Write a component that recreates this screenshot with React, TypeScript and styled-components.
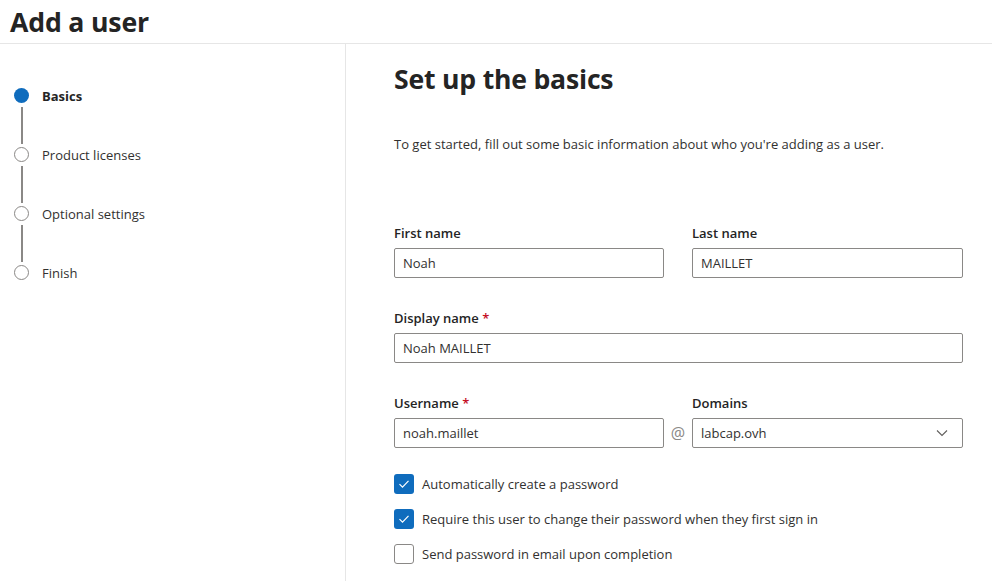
import styled, { createGlobalStyle } from "styled-components";

const GlobalStyle = createGlobalStyle`
  html, body {
    margin: 0;
    padding: 0;
    background: #ffffff;
  }
  body {
    font-family: "Open Sans", "Noto Sans", sans-serif;
    color: #323130;
  }
`;

const steps = [
  { label: "Basics", active: true },
  { label: "Product licenses", active: false },
  { label: "Optional settings", active: false },
  { label: "Finish", active: false },
];

const checks = [
  { label: "Automatically create a password", checked: true },
  { label: "Require this user to change their password when they first sign in", checked: true },
  { label: "Send password in email upon completion", checked: false },
];

export default function App() {
  return (
    <>
      <GlobalStyle />
      <StPage>
        <StHeader>
          <h1>Add a user</h1>
        </StHeader>
        <StBody>
          <StSidebar>
            {steps.map((step, i) => (
              <StStep key={step.label} $last={i === steps.length - 1}>
                <StDot $active={step.active} />
                <StStepLabel $active={step.active}>{step.label}</StStepLabel>
              </StStep>
            ))}
          </StSidebar>
          <StContent>
            <StTitle>Set up the basics</StTitle>
            <StIntro>
              To get started, fill out some basic information about who you're adding as a user.
            </StIntro>
            <StForm>
              <StField>
                <StLabel>First name</StLabel>
                <StInput>Noah</StInput>
              </StField>
              <span />
              <StField>
                <StLabel>Last name</StLabel>
                <StInput>MAILLET</StInput>
              </StField>

              <StField $wide>
                <StLabel>
                  Display name <StRequired>*</StRequired>
                </StLabel>
                <StInput>Noah MAILLET</StInput>
              </StField>

              <StField>
                <StLabel>
                  Username <StRequired>*</StRequired>
                </StLabel>
                <StInput>noah.maillet</StInput>
              </StField>
              <StAt>@</StAt>
              <StField>
                <StLabel>Domains</StLabel>
                <StInput>
                  labcap.ovh
                  <svg width="12" height="8" viewBox="0 0 12 8" fill="none">
                    <path d="M1 1.5l5 5 5-5" stroke="#605e5c" strokeWidth="1.1" />
                  </svg>
                </StInput>
              </StField>
            </StForm>
            <StChecks>
              {checks.map((c) => (
                <StCheckRow key={c.label}>
                  <StBox $checked={c.checked}>
                    {c.checked && (
                      <svg width="12" height="10" viewBox="0 0 12 10" fill="none">
                        <path d="M1.5 5.2l3 3L10.5 1.8" stroke="#fff" strokeWidth="1.2" />
                      </svg>
                    )}
                  </StBox>
                  <span>{c.label}</span>
                </StCheckRow>
              ))}
            </StChecks>
          </StContent>
        </StBody>
      </StPage>
    </>
  );
}

const StPage = styled.div`
  width: 992px;
  height: 581px;
  display: flex;
  flex-direction: column;
  overflow: hidden;
`;

const StHeader = styled.header`
  height: 43px;
  border-bottom: 1px solid #e6e6e6;
  padding-left: 10px;
  display: flex;
  align-items: center;

  h1 {
    margin: 0;
    font-size: 26.7px;
    font-weight: 700;
    color: #242424;
    letter-spacing: -0.2px;
  }
`;

const StBody = styled.div`
  flex: 1;
  display: flex;
`;

const StSidebar = styled.nav`
  width: 346px;
  border-right: 1px solid #e6e6e6;
  padding: 44px 0 0 14px;
  box-sizing: border-box;
`;

const StStep = styled.div<{ $last: boolean }>`
  position: relative;
  display: flex;
  align-items: center;
  gap: 13px;
  height: 15px;
  margin-bottom: ${(p) => (p.$last ? 0 : "44px")};

  &::after {
    content: "";
    display: ${(p) => (p.$last ? "none" : "block")};
    position: absolute;
    left: 7px;
    top: 19px;
    width: 1.5px;
    height: 37px;
    background: #8a8886;
  }
`;

const StDot = styled.span<{ $active: boolean }>`
  width: 15px;
  height: 15px;
  box-sizing: border-box;
  border-radius: 50%;
  flex-shrink: 0;
  background: ${(p) => (p.$active ? "#0f6cbd" : "#fff")};
  border: ${(p) => (p.$active ? "none" : "1.5px solid #8a8886")};
`;

const StStepLabel = styled.span<{ $active: boolean }>`
  font-size: 13px;
  font-weight: ${(p) => (p.$active ? 700 : 400)};
  color: ${(p) => (p.$active ? "#242424" : "#323130")};
`;

const StContent = styled.main`
  flex: 1;
  padding: 17px 0 0 48px;
`;

const StTitle = styled.h2`
  margin: 0;
  font-size: 26.6px;
  font-weight: 700;
  color: #242424;
  line-height: 36px;
  letter-spacing: -0.2px;
`;

const StIntro = styled.p`
  margin: 38px 0 0;
  font-size: 13px;
  line-height: 18px;
  color: #323130;
`;

const StForm = styled.div`
  width: 569px;
  margin-top: 70px;
  display: grid;
  grid-template-columns: 270px 28px 271px;
  row-gap: 30px;
`;

const StField = styled.div<{ $wide?: boolean }>`
  grid-column: ${(p) => (p.$wide ? "1 / -1" : "auto")};
  display: flex;
  flex-direction: column;
  gap: 5px;
`;

const StLabel = styled.label`
  font-size: 13px;
  font-weight: 600;
  line-height: 20px;
  color: #242424;
`;

const StRequired = styled.span`
  color: #c50f1f;
`;

const StInput = styled.div`
  height: 30px;
  box-sizing: border-box;
  border: 1px solid #8a8886;
  border-radius: 2px;
  padding: 0 14px 0 8px;
  display: flex;
  align-items: center;
  justify-content: space-between;
  font-size: 13px;
  color: #323130;
`;

const StAt = styled.span`
  align-self: end;
  height: 30px;
  display: flex;
  align-items: center;
  justify-content: center;
  font-size: 16px;
  color: #8a8886;
`;

const StChecks = styled.div`
  margin-top: 26px;
  display: flex;
  flex-direction: column;
  gap: 15px;
`;

const StCheckRow = styled.div`
  display: flex;
  align-items: center;
  gap: 8px;
  font-size: 13px;
  color: #323130;
`;

const StBox = styled.span<{ $checked: boolean }>`
  width: 20px;
  height: 20px;
  box-sizing: border-box;
  border-radius: 3px;
  display: flex;
  align-items: center;
  justify-content: center;
  background: ${(p) => (p.$checked ? "#0f6cbd" : "#fff")};
  border: ${(p) => (p.$checked ? "none" : "1px solid #8a8886")};
`;
